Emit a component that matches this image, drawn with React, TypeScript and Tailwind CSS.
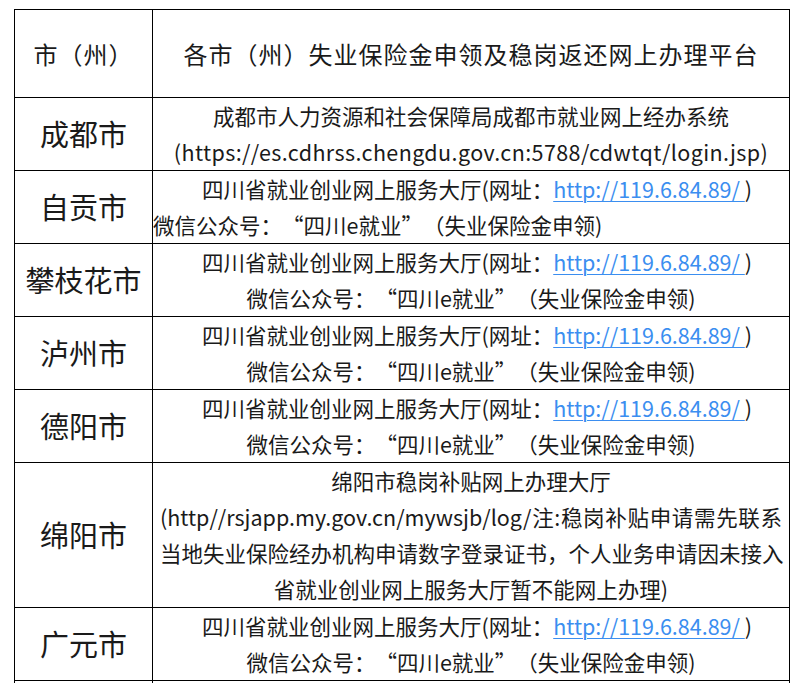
import React from "react";

const FONT = {
  fontFamily: '"Noto Sans CJK SC", "Noto Sans", sans-serif',
};

function Link() {
  return (
    <span className="text-[#3b8ef0] underline decoration-[1px] underline-offset-[3px]">
      http://119.6.84.89/&nbsp;
    </span>
  );
}

function OpenQ() {
  return <span className="inline-block w-[1em] text-right">“</span>;
}
function CloseQ() {
  return <span className="inline-block w-[1em] text-left">”</span>;
}

function StdContent({ leftSecond = false }: { leftSecond?: boolean }) {
  return (
    <>
      <div className="text-center whitespace-nowrap pl-[12px]">
        四川省就业创业网上服务大厅(网址：<Link />)
      </div>
      <div className={leftSecond ? "text-left whitespace-nowrap" : "text-center whitespace-nowrap"}>
        微信公众号：<OpenQ />四川e就业<CloseQ />（失业保险金申领)
      </div>
    </>
  );
}

function Row({
  city,
  height,
  children,
}: {
  city: string;
  height: string;
  children?: React.ReactNode;
}) {
  return (
    <div className={`flex border-b border-black ${height}`}>
      <div className="w-[138px] shrink-0 border-r border-black flex items-center justify-center text-[29px] text-[#1a1a1a]">
        {city}
      </div>
      <div className="w-[637px] shrink-0 border-r border-black flex flex-col justify-center text-[21.5px] leading-[36px] text-[#1a1a1a]">
        {children}
      </div>
    </div>
  );
}

export default function App() {
  return (
    <div lang="zh-CN" className="bg-white w-[805px] h-[683px] overflow-hidden pt-[9px] pl-[14px]" style={FONT}>
      <div className="w-[776px] border-l border-t border-black">
        <div className="flex border-b border-black h-[88px]">
          <div className="w-[138px] shrink-0 border-r border-black flex items-center justify-center text-[24px] tracking-[1px] text-[#1a1a1a]">
            市（州）
          </div>
          <div className="w-[637px] shrink-0 border-r border-black flex items-center justify-center text-[24px] tracking-[1px] text-[#1a1a1a] whitespace-nowrap">
            各市（州）失业保险金申领及稳岗返还网上办理平台
          </div>
        </div>
        <Row city="成都市" height="h-[73px]">
          <div className="text-center whitespace-nowrap">成都市人力资源和社会保障局成都市就业网上经办系统</div>
          <div className="text-center whitespace-nowrap tracking-[0.4px]">(https://es.cdhrss.chengdu.gov.cn:5788/cdwtqt/login.jsp)</div>
        </Row>
        <Row city="自贡市" height="h-[73px]">
          <StdContent leftSecond />
        </Row>
        <Row city="攀枝花市" height="h-[73px]">
          <StdContent />
        </Row>
        <Row city="泸州市" height="h-[73px]">
          <StdContent />
        </Row>
        <Row city="德阳市" height="h-[73px]">
          <StdContent />
        </Row>
        <Row city="绵阳市" height="h-[145px]">
          <div className="text-center whitespace-nowrap">绵阳市稳岗补贴网上办理大厅</div>
          <div className="px-[7px] whitespace-nowrap text-justify [text-align-last:justify]">
            (http//rsjapp.my.gov.cn/mywsjb/log/注:稳岗补贴申请需先联系
          </div>
          <div className="px-[7px] whitespace-nowrap text-justify [text-align-last:justify]">
            当地失业保险经办机构申请数字登录证书，个人业务申请因未接入
          </div>
          <div className="text-center whitespace-nowrap">省就业创业网上服务大厅暂不能网上办理)</div>
        </Row>
        <Row city="广元市" height="h-[73px]">
          <StdContent />
        </Row>
        <Row city="" height="h-[73px]" />
      </div>
    </div>
  );
}
